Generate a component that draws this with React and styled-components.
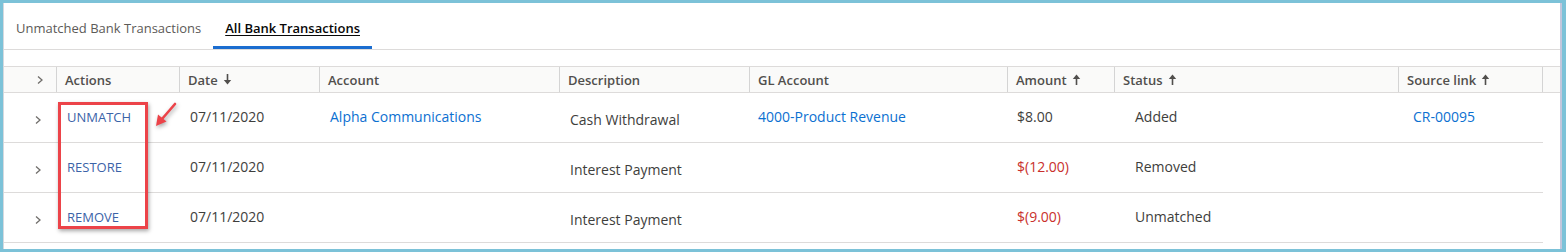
import React from "react";
import styled, { createGlobalStyle } from "styled-components";

const GlobalStyle = createGlobalStyle`
  html, body {
    margin: 0;
    padding: 0;
    background: #ffffff;
  }
  body {
    font-family: "Open Sans", "Noto Sans", Arial, sans-serif;
    -webkit-font-smoothing: antialiased;
  }
`;

const COLS = "53px 123px 140px 240px 190px 258px 107px 284px 144px";

const Frame = styled.div`
  position: relative;
  box-sizing: border-box;
  width: 1566px;
  height: 252px;
  border: 3px solid #7cc2d8;
  border-right-width: 4px;
  background: #fff;
`;

const Inner = styled.div`
  box-sizing: border-box;
  height: 100%;
  border-left: 1px solid #d6d9de;
  border-right: 2px solid #c3c7dc;
`;

const TabBar = styled.div`
  display: flex;
  height: 46px;
  border-bottom: 1px solid #dddbda;
`;

const Tab = styled.div`
  display: flex;
  align-items: center;
  padding: 3px 12px 0;
  font-size: 13px;
  color: ${(p) => (p.$active ? "#080707" : "#5c5a58")};
  font-weight: ${(p) => (p.$active ? 600 : 400)};
  text-decoration: ${(p) => (p.$active ? "underline" : "none")};
  text-underline-offset: 2px;
  box-shadow: ${(p) => (p.$active ? "inset 0 -3px 0 #1b6dd0" : "none")};
`;

const Table = styled.div`
  margin-top: 16px;
`;

const HeadRow = styled.div`
  display: grid;
  grid-template-columns: ${COLS} 1fr;
  height: 25px;
  background: #fafaf9;
  border-top: 1px solid #dddbda;
  border-bottom: 1px solid #dddbda;
`;

const HeadCell = styled.div`
  display: flex;
  align-items: center;
  justify-content: ${(p) => (p.$center ? "center" : "flex-start")};
  padding: 0 0 0 ${(p) => (p.$pad ?? 8)}px;
  border-right: ${(p) => (p.$last ? "none" : "1px solid #d4d4d4")};
  font-size: 13px;
  font-weight: 600;
  color: #514f4d;
  gap: 5px;
`;

const Row = styled.div`
  display: grid;
  grid-template-columns: ${COLS};
  width: 1539px;
  height: 49px;
  border-bottom: 1px solid #dddbda;
`;

const Cell = styled.div`
  display: flex;
  align-items: center;
  justify-content: ${(p) => (p.$center ? "center" : "flex-start")};
  padding: ${(p) => (p.$low ? "4px" : "0")} 0 ${(p) => (p.$low ? "0" : "2px")}
    ${(p) => (p.$pad ?? 10)}px;
  font-size: 14px;
  color: ${(p) => p.$color || "#3e3e3c"};
  white-space: nowrap;
`;

const ActionLink = styled.span`
  color: #3b63a8;
  font-size: 13px;
`;

const Highlight = styled.div`
  position: absolute;
  left: 55px;
  top: 99px;
  width: 90px;
  height: 127px;
  box-sizing: border-box;
  border: 3px solid #ec4349;
  box-shadow: 1px 2px 4px rgba(0, 0, 0, 0.35);
  pointer-events: none;
`;

const Pointer = styled.svg`
  position: absolute;
  left: 150px;
  top: 98px;
  overflow: visible;
  filter: drop-shadow(1px 2px 2px rgba(0, 0, 0, 0.35));
`;

const Chevron = ({ size = 12 }) => (
  <svg width={size} height={size} viewBox="0 0 12 12">
    <path d="M4 2.5 L8 6 L4 9.5" fill="none" stroke="#706e6b" strokeWidth="1.3" />
  </svg>
);

const Arrow = ({ up }) => (
  <svg width="9" height="11" viewBox="0 0 9 11">
    {up ? (
      <>
        <path d="M4.5 0.5 L0.8 5 L8.2 5 Z" fill="#514f4d" />
        <rect x="3.7" y="4" width="1.6" height="7" fill="#514f4d" />
      </>
    ) : (
      <>
        <rect x="3.7" y="0" width="1.6" height="7" fill="#514f4d" />
        <path d="M4.5 10.5 L0.8 6 L8.2 6 Z" fill="#514f4d" />
      </>
    )}
  </svg>
);

const rows = [
  {
    action: "UNMATCH",
    date: "07/11/2020",
    account: "Alpha Communications",
    desc: "Cash Withdrawal",
    gl: "4000-Product Revenue",
    amount: "$8.00",
    negative: false,
    status: "Added",
    source: "CR-00095",
  },
  {
    action: "RESTORE",
    date: "07/11/2020",
    desc: "Interest Payment",
    amount: "$(12.00)",
    negative: true,
    status: "Removed",
  },
  {
    action: "REMOVE",
    date: "07/11/2020",
    desc: "Interest Payment",
    amount: "$(9.00)",
    negative: true,
    status: "Unmatched",
  },
];

export default function App() {
  return (
    <>
      <GlobalStyle />
      <Frame>
        <Inner>
          <TabBar>
            <Tab>Unmatched Bank Transactions</Tab>
            <Tab $active>All Bank Transactions</Tab>
          </TabBar>
          <Table>
            <HeadRow>
              <HeadCell $center $pad={20}>
                <Chevron />
              </HeadCell>
              <HeadCell>Actions</HeadCell>
              <HeadCell>
                Date <Arrow />
              </HeadCell>
              <HeadCell>Account</HeadCell>
              <HeadCell>Description</HeadCell>
              <HeadCell>GL Account</HeadCell>
              <HeadCell>
                Amount <Arrow up />
              </HeadCell>
              <HeadCell>
                Status <Arrow up />
              </HeadCell>
              <HeadCell>
                Source link <Arrow up />
              </HeadCell>
              <HeadCell $last />
            </HeadRow>
            {rows.map((r, i) => (
              <Row key={i}>
                <Cell $center $low $pad={14}>
                  <Chevron />
                </Cell>
                <Cell>
                  <ActionLink>{r.action}</ActionLink>
                </Cell>
                <Cell>{r.date}</Cell>
                <Cell $color="#0b70d1">{r.account}</Cell>
                <Cell $low>{r.desc}</Cell>
                <Cell $pad={8} $color="#0b70d1">
                  {r.gl}
                </Cell>
                <Cell $pad={9} $color={r.negative ? "#c9302c" : "#3e3e3c"}>
                  {r.amount}
                </Cell>
                <Cell $pad={20}>{r.status}</Cell>
                <Cell $pad={14} $color="#0b70d1">
                  {r.source}
                </Cell>
              </Row>
            ))}
          </Table>
        </Inner>
        <Highlight />
        <Pointer width="30" height="30" viewBox="0 0 30 30">
          <line x1="22" y1="3" x2="9" y2="18" stroke="#ec4349" strokeWidth="2.6" strokeLinecap="round" />
          <path d="M3 25 L5 13.5 L13.5 20.5 Z" fill="#ec4349" />
        </Pointer>
      </Frame>
    </>
  );
}
